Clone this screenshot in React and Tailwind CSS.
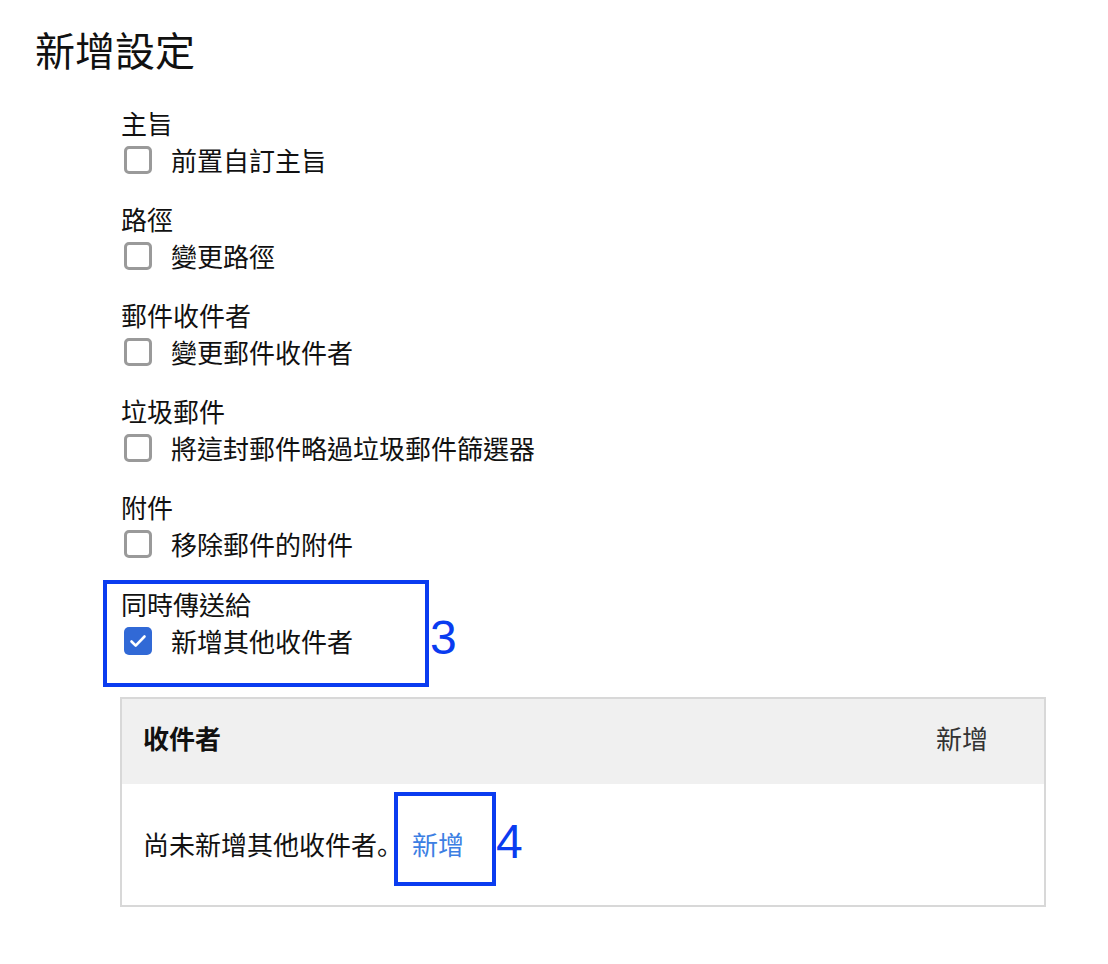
import React from "react";

const sections = [
  { label: "主旨", option: "前置自訂主旨" },
  { label: "路徑", option: "變更路徑" },
  { label: "郵件收件者", option: "變更郵件收件者" },
  { label: "垃圾郵件", option: "將這封郵件略過垃圾郵件篩選器" },
  { label: "附件", option: "移除郵件的附件" },
];

const Checkbox = ({ checked }) =>
  checked ? (
    <span className="ml-[3px] flex h-[28px] w-[28px] items-center justify-center rounded-[5px] bg-[#3169d6]">
      <svg width="24" height="24" viewBox="0 0 24 24" fill="none">
        <path d="M5.5 12.5l4.2 4.2L18.5 7.5" stroke="#fff" strokeWidth="2.6" strokeLinecap="round" strokeLinejoin="round" />
      </svg>
    </span>
  ) : (
    <span className="ml-[3px] block h-[28px] w-[28px] rounded-[5px] border-[3px] border-[#9a9a9a] bg-white" />
  );

const Section = ({ label, option, checked }) => (
  <div>
    <div className="h-[36px] leading-[36px]">{label}</div>
    <div className="flex h-[37px] items-center">
      <Checkbox checked={checked} />
      <span className="ml-[19px]">{option}</span>
    </div>
  </div>
);

export default function App() {
  return (
    <div className="min-h-screen bg-white font-['Noto_Sans_CJK_TC',sans-serif] text-[26px] text-[#111]">
      <h1 className="h-[74px] pl-[35px] pt-[25px] text-[40px] font-normal leading-[48px]">新增設定</h1>
      <div className="flex flex-col gap-[23px] pl-[121px] pt-[31px]">
        {sections.map((s) => (
          <Section key={s.label} label={s.label} option={s.option} />
        ))}
        <div className="relative mt-[1px]">
          <Section label="同時傳送給" option="新增其他收件者" checked />
          {/* annotation 3 */}
          <div className="absolute left-[-18px] top-[-6px] h-[107px] w-[326px] border-4 border-[#0a3cf0]" />
          <div className="absolute left-[309px] top-[28px] font-['Liberation_Sans',sans-serif] text-[48px] leading-none text-[#0a3cf0]">3</div>
        </div>
      </div>
      <div className="ml-[120px] mt-[38px] w-[926px] border-2 border-[#d8d8d8]">
        <div className="flex h-[85px] items-center justify-between bg-[#f0f0f0] pb-[8px] pl-[21px] pr-[56px]">
          <span className="font-bold">收件者</span>
          <span className="text-[#333]">新增</span>
        </div>
        <div className="relative flex h-[121px] items-center pb-[2px] pl-[21px]">
          <span>
            尚未新增其他收件者<span className="font-['Noto_Sans_CJK_SC',sans-serif]">。</span>
          </span>
          <a className="ml-[9px] text-[#3d7fe3]">新增</a>
          {/* annotation 4 */}
          <div className="absolute left-[272px] top-[8px] h-[94px] w-[102px] border-4 border-[#0a3cf0]" />
          <div className="absolute left-[374px] top-[34px] font-['Liberation_Sans',sans-serif] text-[48px] leading-none text-[#0a3cf0]">4</div>
        </div>
      </div>
    </div>
  );
}
